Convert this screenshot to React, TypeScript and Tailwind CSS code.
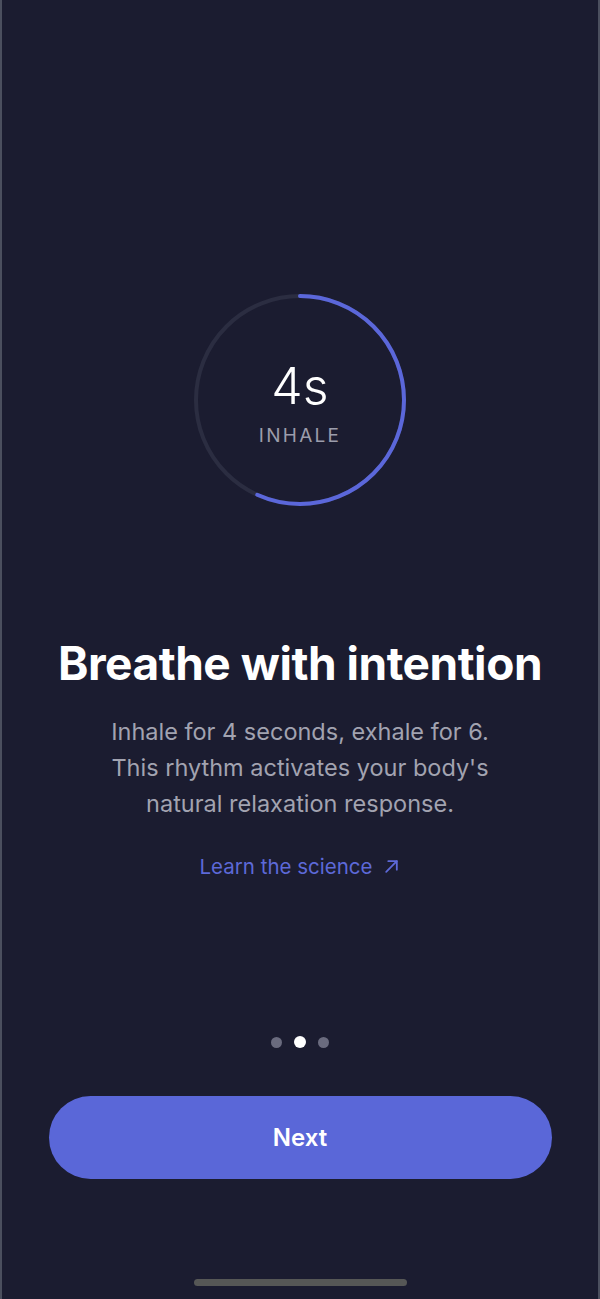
import React from "react";

export default function App() {
  const r = 104;
  const c = 2 * Math.PI * r;
  const progress = 0.567;
  return (
    <div
      className="w-[600px] h-[1299px] bg-[#1b1c30] border-x-2 border-[#4b4f5e] flex flex-col items-center overflow-hidden relative"
      style={{ fontFamily: "Inter, 'Noto Sans', sans-serif" }}
    >
      <div className="mt-[292px] relative w-[216px] h-[216px] flex flex-col items-center pt-[69px]">
        <svg width="216" height="216" viewBox="0 0 216 216" className="absolute inset-0">
          <circle cx="108" cy="108" r={r} fill="none" stroke="#2b2d41" strokeWidth="4" />
          <circle
            cx="108"
            cy="108"
            r={r}
            fill="none"
            stroke="#5b67da"
            strokeWidth="4"
            strokeLinecap="round"
            strokeDasharray={`${c * progress} ${c}`}
            transform="rotate(-90 108 108)"
          />
        </svg>
        <div className="relative text-white text-[50px] font-light leading-none">4s</div>
        <div className="relative text-[#9c9dab] text-[19px] tracking-[0.12em] mt-[15px] leading-none">INHALE</div>
      </div>

      <h1 className="mt-[132px] text-white text-[46px] font-bold leading-none tracking-[-0.01em]">
        Breathe with intention
      </h1>

      <p className="mt-[28px] text-[#a2a3b0] text-[23.5px] leading-[36px] text-center">
        Inhale for 4 seconds, exhale for 6.
        <br />
        This rhythm activates your body's
        <br />
        natural relaxation response.
      </p>

      <div className="mt-[32px] flex items-center gap-[11px] text-[#5d69d8] text-[20.5px] leading-[25px]">
        <span>Learn the science</span>
        <svg width="17" height="17" viewBox="0 0 16 16" fill="none" stroke="#5d69d8" strokeWidth="1.7" strokeLinecap="round" strokeLinejoin="round">
          <path d="M3 13 L13 3" />
          <path d="M5 3 H13 V11" />
        </svg>
      </div>

      <div className="mt-[157px] flex items-center gap-[12px]">
        <div className="w-[11px] h-[11px] rounded-full bg-[#6a6b7e]" />
        <div className="w-[12px] h-[12px] rounded-full bg-white" />
        <div className="w-[11px] h-[11px] rounded-full bg-[#6a6b7e]" />
      </div>

      <button className="mt-[48px] w-[503px] h-[83px] rounded-full bg-[#5a67d8] text-white text-[24px] font-semibold">
        Next
      </button>

      <div className="mt-[100px] w-[213px] h-[7px] rounded-full bg-[#565756]" />
    </div>
  );
}
